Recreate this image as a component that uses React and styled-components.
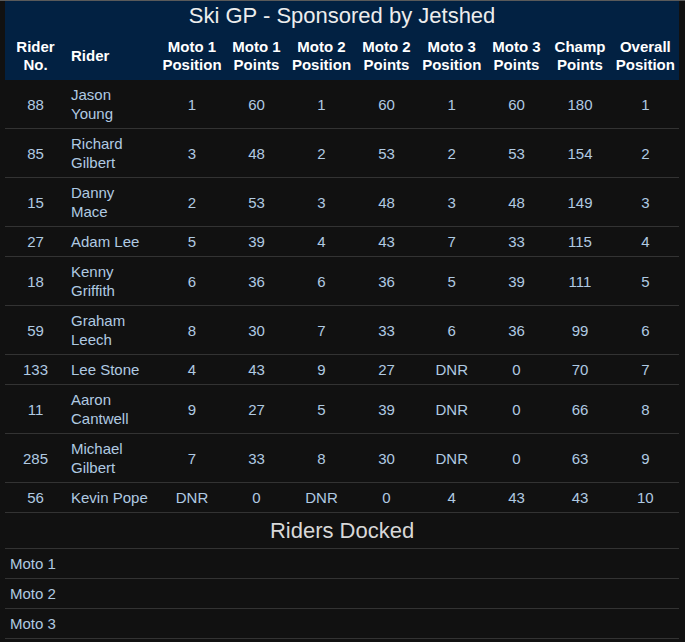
import React from 'react'
import styled, { createGlobalStyle } from 'styled-components'

const GlobalStyle = createGlobalStyle`
  body {
    margin: 0;
    background: #111111;
    border-top: 1px solid #5a5a5a;
    font-family: 'Liberation Sans', Arial, sans-serif;
  }
`

const Page = styled.div`
  padding: 0 5px;
`

const Table = styled.table`
  width: 674px;
  border-collapse: collapse;
  table-layout: fixed;
`

const HeadRow = styled.tr`
  background: #022142;
`

const TitleCell = styled.th`
  padding: 3px 0 5px;
  font-size: 22px;
  line-height: 24px;
  font-weight: normal;
  color: #ededed;
  text-align: center;
`

const LabelCell = styled.th`
  padding: 5px 0 6px;
  font-size: 15px;
  line-height: 18px;
  font-weight: bold;
  color: #ffffff;
  text-align: ${(p) => (p.$left ? 'left' : 'center')};
  padding-left: ${(p) => (p.$left ? '5px' : '0')};
  vertical-align: middle;
`

const Row = styled.tr`
  border-bottom: 1px solid #333333;
`

const Cell = styled.td`
  padding: 5px ${(p) => (p.$left ? '5px' : '0')};
  font-size: 15px;
  line-height: 19px;
  color: #b0cae2;
  text-align: ${(p) => (p.$left ? 'left' : 'center')};
  vertical-align: middle;
`

const SectionCell = styled.td`
  padding: 5px 0;
  font-size: 22px;
  line-height: 25px;
  color: #d8d8d8;
  text-align: center;
`

const widths = [61, 94, 64, 65, 65, 65, 65.5, 64, 63, 67.5]

const labels = [
  ['Rider', 'No.'],
  ['Rider'],
  ['Moto 1', 'Position'],
  ['Moto 1', 'Points'],
  ['Moto 2', 'Position'],
  ['Moto 2', 'Points'],
  ['Moto 3', 'Position'],
  ['Moto 3', 'Points'],
  ['Champ', 'Points'],
  ['Overall', 'Position'],
]

const riders = [
  ['88', ['Jason', 'Young'], '1', '60', '1', '60', '1', '60', '180', '1'],
  ['85', ['Richard', 'Gilbert'], '3', '48', '2', '53', '2', '53', '154', '2'],
  ['15', ['Danny', 'Mace'], '2', '53', '3', '48', '3', '48', '149', '3'],
  ['27', ['Adam Lee'], '5', '39', '4', '43', '7', '33', '115', '4'],
  ['18', ['Kenny', 'Griffith'], '6', '36', '6', '36', '5', '39', '111', '5'],
  ['59', ['Graham', 'Leech'], '8', '30', '7', '33', '6', '36', '99', '6'],
  ['133', ['Lee Stone'], '4', '43', '9', '27', 'DNR', '0', '70', '7'],
  ['11', ['Aaron', 'Cantwell'], '9', '27', '5', '39', 'DNR', '0', '66', '8'],
  ['285', ['Michael', 'Gilbert'], '7', '33', '8', '30', 'DNR', '0', '63', '9'],
  ['56', ['Kevin Pope'], 'DNR', '0', 'DNR', '0', '4', '43', '43', '10'],
]

const docked = ['Moto 1', 'Moto 2', 'Moto 3']

const Lines = ({ lines }) =>
  lines.map((line, i) => (
    <React.Fragment key={i}>
      {i > 0 && <br />}
      {line}
    </React.Fragment>
  ))

const App = () => {
  return (
    <>
      <GlobalStyle />
      <Page>
        <Table>
          <colgroup>
            {widths.map((w, i) => (
              <col key={i} style={{ width: w }} />
            ))}
          </colgroup>
          <thead>
            <HeadRow>
              <TitleCell colSpan={10}>Ski GP - Sponsored by Jetshed</TitleCell>
            </HeadRow>
            <HeadRow>
              {labels.map((l, i) => (
                <LabelCell key={i} $left={i === 1}>
                  <Lines lines={l} />
                </LabelCell>
              ))}
            </HeadRow>
          </thead>
          <tbody>
            {riders.map((r) => (
              <Row key={r[0]}>
                {r.map((v, i) =>
                  i === 1 ? (
                    <Cell key={i} $left>
                      <Lines lines={v} />
                    </Cell>
                  ) : (
                    <Cell key={i}>{v}</Cell>
                  )
                )}
              </Row>
            ))}
            <Row>
              <SectionCell colSpan={10}>Riders Docked</SectionCell>
            </Row>
            {docked.map((d) => (
              <Row key={d}>
                <Cell colSpan={10} $left>
                  {d}
                </Cell>
              </Row>
            ))}
          </tbody>
        </Table>
      </Page>
    </>
  )
}

export default App
